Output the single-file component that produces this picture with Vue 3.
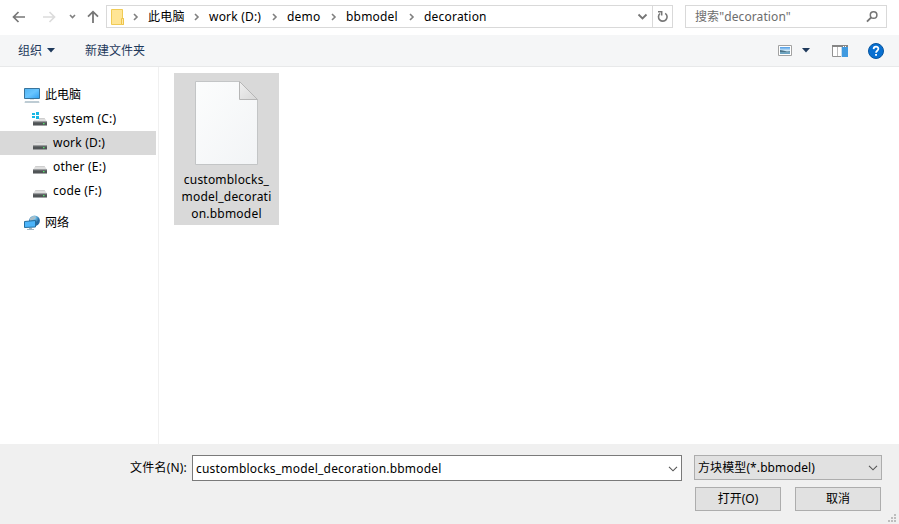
<script setup>
const crumbs = [
  { name: '此电脑', width: 61 },
  { name: 'work (D:)', width: 78 },
  { name: 'demo', width: 59 },
  { name: 'bbmodel', width: 78 },
  { name: 'decoration', width: 90 },
]
const drives = [
  { name: 'system (C:)', system: true },
  { name: 'work (D:)', selected: true },
  { name: 'other (E:)' },
  { name: 'code (F:)' },
]
</script>

<template>
  <div class="dialog">
    <header class="nav">
      <svg class="arrows" width="106" height="35" viewBox="0 0 106 35" fill="none">
        <path d="M25 17H14M18.5 12L13.5 17L18.5 22" stroke="#777" stroke-width="1.7" />
        <path d="M43 17H54M49.5 12L54.5 17L49.5 22" stroke="#dcdcdc" stroke-width="1.7" />
        <path d="M70 15L72.5 17.5L75 15" stroke="#808080" stroke-width="1.6" />
        <path d="M93 23V12M88 16.7L93 11.7L98 16.7" stroke="#777" stroke-width="1.8" />
      </svg>
      <div class="address">
        <svg class="folder" width="15" height="18" viewBox="0 0 15 18">
          <path d="M1.5 1.5H12.5V10.5H13.5V16.5H1.5Z" fill="#ffe595" stroke="#f0cb55" />
          <path d="M11.5 16V10.5H13.5V16.5H11.5" fill="#ffe9a5" stroke="#eec44b" />
        </svg>
        <div v-for="c in crumbs" :key="c.name" class="crumb" :style="{ width: c.width + 'px' }">
          <svg width="6" height="8" viewBox="0 0 6 8" fill="none"><path d="M1 1L4 4L1 7" stroke="#808080" stroke-width="1.6" /></svg>
          <span>{{ c.name }}</span>
        </div>
        <svg class="history" width="11" height="8" viewBox="0 0 11 8" fill="none"><path d="M1.5 1.5L5.5 5.5L9.5 1.5" stroke="#757575" stroke-width="1.8" /></svg>
        <div class="refresh">
          <svg width="12" height="13" viewBox="0 0 12 13" fill="none">
            <path d="M8.2 3.3A4.3 4.3 0 1 1 3.1 3.5" stroke="#777" stroke-width="1.6" />
            <path d="M1 1.8H4.7V5.5" stroke="#777" stroke-width="1.5" />
          </svg>
        </div>
      </div>
      <div class="search">
        <span>搜索"decoration"</span>
        <svg width="14" height="14" viewBox="0 0 14 14" fill="none">
          <circle cx="8.6" cy="5" r="3.3" stroke="#757575" stroke-width="1.5" />
          <path d="M6.2 7.4L2 11.6" stroke="#757575" stroke-width="1.9" />
        </svg>
      </div>
    </header>

    <div class="toolbar">
      <span class="organize">组织</span>
      <svg class="tri" width="8" height="5" viewBox="0 0 8 5"><path d="M0 0H8L4 4.6Z" fill="#1e395b" /></svg>
      <span class="newfolder">新建文件夹</span>
      <svg class="view" width="14" height="11" viewBox="0 0 14 11">
        <defs>
          <linearGradient id="sky" x2="0" y2="1"><stop stop-color="#4d9be5" /><stop offset=".55" stop-color="#d9effa" /><stop offset="1" stop-color="#8fc4dc" /></linearGradient>
        </defs>
        <path d="M.5 .5H13.5V10.5H.5Z" fill="#fff" stroke="#a2a2a2" />
        <path d="M2 2H12V9H2Z" fill="url(#sky)" />
        <path d="M2 5L5 5.5L9 6.5L12 6.2V7.4H2Z" fill="#28556b" opacity=".8" />
        <path d="M2 7.4H12V9H2Z" fill="#6ba3c2" />
      </svg>
      <svg class="tri view-tri" width="8" height="5" viewBox="0 0 8 5"><path d="M0 0H8L4 4.6Z" fill="#1e395b" /></svg>
      <svg class="pane" width="16" height="12" viewBox="0 0 16 12">
        <path d="M.5 .5H15.5V11.5H.5Z" fill="#fff" stroke="#929292" />
        <path d="M0 0H16V2H0Z" fill="#858585" />
        <path d="M5 2H6V11H5Z" fill="#bcbcbc" />
        <path d="M10 2H16V12H10Z" fill="#409ae0" />
        <path d="M9 2H10V12H9Z" fill="#c5dcee" />
        <path d="M11 1H12V2H11ZM13 1H14V2H13Z" fill="#fff" />
      </svg>
      <svg class="help" width="16" height="16" viewBox="0 0 16 16">
        <circle cx="8" cy="8" r="7.5" fill="#0870d1" stroke="#07559f" />
        <path d="M5.6 6.1C5.7 2.9 10.4 3 10.4 5.8C10.4 7.7 8 7.8 8 9.8" fill="none" stroke="#fff" stroke-width="1.7" />
        <path d="M7.1 11H9V12.8H7.1Z" fill="#fff" />
      </svg>
    </div>

    <main class="content">
      <nav class="sidebar">
        <div class="row root">
          <svg width="16" height="15" viewBox="0 0 16 15">
            <defs><linearGradient id="screen" x2="1" y2="1"><stop stop-color="#52b4f1" /><stop offset=".5" stop-color="#69c5ff" /><stop offset="1" stop-color="#309ff0" /></linearGradient></defs>
            <path d="M.5 .5H15.5V10.5H.5Z" fill="url(#screen)" stroke="#39749c" />
            <path d="M6 11H10V12H6Z" fill="#dde4e8" />
            <path d="M1 13.5H15L15.5 14.5H.5Z" fill="#7f9aaa" />
          </svg>
          <span>此电脑</span>
        </div>
        <div v-for="d in drives" :key="d.name" class="row drive" :class="{ selected: d.selected }">
          <svg width="16" height="14" viewBox="0 0 16 14">
            <path d="M3.5 6H12.5L15 9.5H1Z" fill="#dedede" />
            <path d="M3.5 6H12.5L13 6.7H3Z" fill="#c9c9c9" />
            <path d="M1 9.5H15V13.5H1Z" fill="#505456" />
            <path d="M1 9.5H15V10.2H1ZM1 13H15V13.6H1Z" fill="#999c9e" />
            <path d="M11 11H12.5V12.3H11Z" fill="#53e56b" />
            <g v-if="d.system">
              <path d="M0 0H7V8H0Z" fill="#fff" />
              <path d="M0 1H3V3H0ZM4 0H7V3H4ZM0 4H3V6H0ZM4 4H7V7H4Z" fill="#19b7e4" />
            </g>
          </svg>
          <span>{{ d.name }}</span>
        </div>
        <div class="row root network">
          <svg width="17" height="16" viewBox="0 0 17 16">
            <defs><radialGradient id="globe" cx=".45" cy=".2"><stop stop-color="#b8e4f5" /><stop offset=".5" stop-color="#5aaad8" /><stop offset="1" stop-color="#246aa2" /></radialGradient></defs>
            <circle cx="10.5" cy="5.8" r="5.4" fill="url(#globe)" />
            <path d="M6 3L10 1L12 2L9 5L6 6Z" fill="#a9bcc5" />
            <path d="M.5 6.5L11.5 5.5V12L.5 12.5Z" fill="#4bb4fa" stroke="#246e9f" />
            <path d="M5 13H8V14H10V15H3V14H5Z" fill="#a1b6c3" />
          </svg>
          <span>网络</span>
        </div>
      </nav>
      <section class="files">
        <div class="file">
          <svg width="65" height="86" viewBox="0 0 65 86">
            <defs>
              <linearGradient id="paper" x2="1" y2="1"><stop stop-color="#fcfdfd" /><stop offset="1" stop-color="#f2f4f6" /></linearGradient>
              <linearGradient id="fold" x2="1" y2="1"><stop stop-color="#f1f1f1" /><stop offset="1" stop-color="#d7d7d7" /></linearGradient>
            </defs>
            <path d="M1.5 1.5H45.5L63.5 19.5V84.5H1.5Z" fill="url(#paper)" stroke="#c3c5c6" />
            <path d="M45.5 1.5V19.5H63.5Z" fill="url(#fold)" stroke="#b6b6b6" />
          </svg>
          <div class="filename"><span>customblocks_</span><span>model_decorati</span><span>on.bbmodel</span></div>
        </div>
      </section>
    </main>

    <footer class="footer">
      <div class="name-row">
        <span class="label">文件名(N):</span>
        <div class="input">
          <span>customblocks_model_decoration.bbmodel</span>
          <svg width="10" height="6" viewBox="0 0 10 6" fill="none"><path d="M1 .8L5 4.8L9 .8" stroke="#555" stroke-width="1.1" /></svg>
        </div>
        <div class="select">
          <span>方块模型(*.bbmodel)</span>
          <svg width="10" height="6" viewBox="0 0 10 6" fill="none"><path d="M1 .8L5 4.8L9 .8" stroke="#555" stroke-width="1.1" /></svg>
        </div>
      </div>
      <div class="actions">
        <button>打开(O)</button>
        <button>取消</button>
      </div>
      <svg class="grip" width="8" height="8" viewBox="0 0 8 8"><path d="M6 0H8V2H6ZM3 3H5V5H3ZM6 3H8V5H6ZM0 6H2V8H0ZM3 6H5V8H3ZM6 6H8V8H6Z" fill="#bdbdbd" /></svg>
    </footer>
  </div>
</template>

<style>
body { margin: 0; overflow: hidden; }
</style>

<style scoped>
* { box-sizing: border-box; }
.dialog { width: 899px; height: 524px; display: flex; flex-direction: column; background: #fff; color: #000; font: 12px/16px "Noto Sans", "Noto Sans CJK SC", sans-serif; letter-spacing: .2px; white-space: nowrap; }
svg { display: block; flex: none; }
.nav { height: 35px; display: flex; }
.address { width: 567px; height: 23px; margin-top: 5px; border: 1px solid #d9d9d9; display: flex; align-items: center; }
.folder { margin: 0 8px 0 3px; }
.crumb { display: flex; align-items: center; gap: 9px; flex: none; }
.history { margin-left: auto; margin-right: 4px; }
.refresh { width: 20px; height: 21px; border-left: 1px solid #d9d9d9; display: flex; align-items: center; justify-content: center; }
.search { width: 202px; height: 23px; margin: 5px 0 0 12px; padding: 0 7px 0 9px; border: 1px solid #d9d9d9; display: flex; align-items: center; justify-content: space-between; color: #6d6d6d; letter-spacing: .1px; }
.toolbar { height: 32px; display: flex; align-items: center; background: #f5f6f7; border-bottom: 1px solid #e8e9ea; padding-left: 18px; color: #1e395b; }
.organize { width: 24px; letter-spacing: 0; }
.tri { margin-left: 5px; }
.newfolder { margin-left: 30px; letter-spacing: 0; }
.view { margin-left: auto; }
.view-tri { margin-left: 10px; }
.pane { margin-left: 22px; }
.help { margin: 0 15px 0 20px; }
.content { height: 377px; display: flex; }
.sidebar { width: 159px; border-right: 1px solid #f0f0f0; padding-top: 16px; }
.row { width: 156px; height: 24px; display: flex; align-items: center; gap: 5px; }
.root { padding-left: 24px; letter-spacing: 0; }
.drive { padding-left: 32px; }
.selected { background: #d9d9d9; }
.network { margin-top: 8px; gap: 4px; }
.files { padding: 6px 0 0 15px; }
.file { width: 105px; height: 152px; background: #d9d9d9; display: flex; flex-direction: column; align-items: center; padding-top: 7px; }
.filename { display: flex; flex-direction: column; align-items: center; line-height: 17px; margin-top: 5px; }
.footer { height: 80px; background: #f0f0f0; position: relative; padding-top: 11px; }
.name-row { display: flex; }
.label { width: 192px; padding: 5px 5px 0 0; text-align: right; }
.input { width: 490px; height: 26px; background: #fff; border: 1px solid #7a7a7a; display: flex; align-items: center; justify-content: space-between; padding: 1px 3px 0 3px; }
.select { width: 188px; height: 25px; margin-left: 12px; background: #e1e1e1; border: 1px solid #adadad; display: flex; align-items: center; justify-content: space-between; padding: 0 3px 0 3px; letter-spacing: .1px; }
.actions { display: flex; justify-content: flex-end; gap: 14px; padding-right: 18px; margin-top: 6px; }
button { width: 86px; height: 24px; padding: 0; background: #e1e1e1; border: 1px solid #adadad; border-radius: 0; color: #000; font: inherit; }
.grip { position: absolute; right: 3px; bottom: 2px; }
</style>
